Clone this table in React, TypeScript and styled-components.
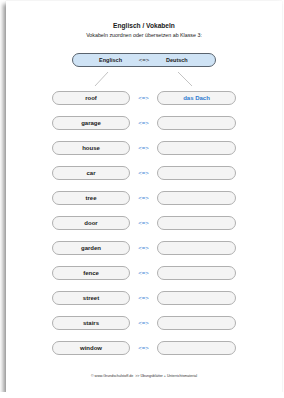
import styled, { createGlobalStyle } from "styled-components"

const GlobalStyle = createGlobalStyle`
	body {
		margin: 0;
		background: #ffffff;
		font-family: "Liberation Sans", Arial, sans-serif;
	}
`

const words: [string, string][] = [
	["roof", "das Dach"],
	["garage", ""],
	["house", ""],
	["car", ""],
	["tree", ""],
	["door", ""],
	["garden", ""],
	["fence", ""],
	["street", ""],
	["stairs", ""],
	["window", ""],
]

const App = () => {
	return (
		<>
			<GlobalStyle />
			<Page>
				<Sheet>
					<Title>Englisch / Vokabeln</Title>
					<Subtitle>Vokabeln zuordnen oder übersetzen ab Klasse 3:</Subtitle>
					<HeaderPill>
						<span>Englisch</span>
						<Arrow $dark>&lt;=&gt;</Arrow>
						<span>Deutsch</span>
					</HeaderPill>
					<Connectors viewBox="0 0 184 24" width={184} height={24}>
						<line x1="56" y1="5" x2="43" y2="19" />
						<line x1="126" y1="5" x2="140" y2="19" />
					</Connectors>
					<Rows>
						{words.map(([en, de]) => (
							<Row key={en}>
								<WordBox>{en}</WordBox>
								<Arrow>&lt;=&gt;</Arrow>
								<WordBox $answer>{de}</WordBox>
							</Row>
						))}
					</Rows>
					<Footer>
						© www.Grundschulstoff.de &nbsp;&gt;&gt; Übungsblätter + Unterrichtsmaterial
					</Footer>
				</Sheet>
			</Page>
		</>
	)
}

const Page = styled.div`
	padding: 1px 0 0 6px;
`

const Sheet = styled.div`
	width: 276px;
	height: 391px;
	box-sizing: border-box;
	padding-top: 20px;
	background: #ffffff;
	box-shadow: -3px 3px 4px rgba(0, 0, 0, 0.38), 0 0 1px rgba(0, 0, 0, 0.15);
	display: flex;
	flex-direction: column;
	align-items: center;
	color: #1a1a1a;
`

const Title = styled.div`
	font-size: 6.6px;
	font-weight: bold;
	line-height: 9px;
`

const Subtitle = styled.div`
	font-size: 5.3px;
	line-height: 7px;
	margin-top: 1.5px;
`

const HeaderPill = styled.div`
	margin-top: 14.5px;
	width: 144px;
	height: 14px;
	box-sizing: border-box;
	border: 1px solid #59636e;
	border-radius: 7px;
	background: #cfe3f5;
	display: grid;
	grid-template-columns: 1fr 44px 1fr;
	align-items: center;
	font-size: 5.5px;
	font-weight: bold;

	span:first-child {
		text-align: right;
	}
	span:last-child {
		text-align: left;
	}
`

const Arrow = styled.span<{ $dark?: boolean }>`
	font-size: 6px;
	font-weight: normal;
	text-align: center;
	color: ${(p) => (p.$dark ? "#333333" : "#3a82d6")};
`

const Connectors = styled.svg`
	display: block;
	stroke: #b4b4b4;
	stroke-width: 0.8;
`

const Rows = styled.div`
	display: flex;
	flex-direction: column;
	gap: 11px;
`

const Row = styled.div`
	display: grid;
	grid-template-columns: 78px 27px 79px;
	align-items: center;
`

const WordBox = styled.div<{ $answer?: boolean }>`
	height: 14px;
	box-sizing: border-box;
	border: 1px solid #b0b0b0;
	border-radius: 7px;
	background: #f4f4f4;
	display: flex;
	align-items: center;
	justify-content: center;
	font-size: 6px;
	font-weight: bold;
	color: ${(p) => (p.$answer ? "#2f7bd0" : "#1a1a1a")};
`

const Footer = styled.div`
	margin-top: 18.5px;
	font-size: 3.6px;
	line-height: 5px;
	color: #333333;
`

export default App
